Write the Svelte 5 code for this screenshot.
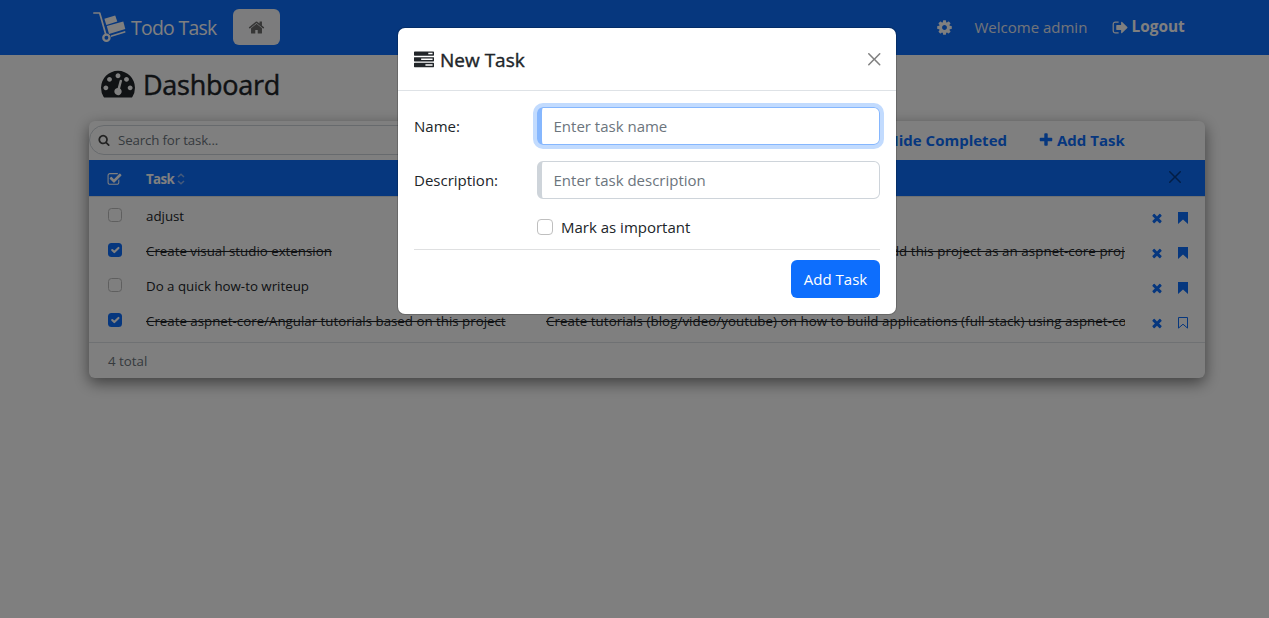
<script>
  const paths = {
    home: 'M1472 992v480q0 26-19 45t-45 19h-384v-384h-256v384h-384q-26 0-45-19t-19-45v-480q0-1 .5-3t.5-3l575-474 575 474q1 2 1 6zm223-69l-62 74q-8 9-21 11h-3q-13 0-21-7l-692-577-692 577q-12 8-24 7-13-2-21-11l-62-74q-8-10-7-23.5t11-21.5l719-599q32-26 76-26t76 26l244 204v-195q0-14 9-23t23-9h192q14 0 23 9t9 23v408l219 182q10 8 11 21.5t-7 23.5z',
    cog: 'M1152 896q0-106-75-181t-181-75-181 75-75 181 75 181 181 75 181-75 75-181zm512-109v222q0 12-8 23t-20 13l-185 28q-19 54-39 91 35 50 107 138 10 12 10 25t-9 23q-27 37-99 108t-94 71q-12 0-26-9l-138-108q-44 23-91 38-16 136-29 186-7 28-36 28h-222q-14 0-24.5-8.5t-11.5-21.5l-28-184q-49-16-90-37l-141 107q-10 9-25 9-14 0-25-11-126-114-165-168-7-10-7-23 0-12 8-23 15-21 51-66.5t54-70.5q-27-50-41-99l-183-27q-13-2-21-12.5t-8-23.5v-222q0-12 8-23t19-13l186-28q14-46 39-92-40-57-107-138-10-12-10-24 0-10 9-23 26-36 98.5-107.5t94.5-71.5q13 0 26 10l138 107q44-23 91-38 16-136 29-186 7-28 36-28h222q14 0 24.5 8.5t11.5 21.5l28 184q49 16 90 37l142-107q9-9 24-9 13 0 25 10 129 119 165 170 7 8 7 22 0 12-8 23-15 21-51 66.5t-54 70.5q26 50 41 98l183 28q13 2 21 12.5t8 23.5z',
    signOut: 'M704 1440q0 4 1 20t.5 26.5-3 23.5-10 19.5-20.5 6.5h-320q-119 0-203.5-84.5t-84.5-203.5v-704q0-119 84.5-203.5t203.5-84.5h320q13 0 22.5 9.5t9.5 22.5q0 4 1 20t.5 26.5-3 23.5-10 19.5-20.5 6.5h-320q-66 0-113 47t-47 113v704q0 66 47 113t113 47h312l11.5 1 11.5 3 8 5.5 7 9 2 13.5zm928-544q0 26-19 45l-544 544q-19 19-45 19t-45-19-19-45v-288h-448q-26 0-45-19t-19-45v-384q0-26 19-45t45-19h448v-288q0-26 19-45t45-19 45 19l544 544q19 19 19 45z',
    search: 'M1216 832q0-185-131.5-316.5t-316.5-131.5-316.5 131.5-131.5 316.5 131.5 316.5 316.5 131.5 316.5-131.5 131.5-316.5zm512 832q0 52-38 90t-90 38q-54 0-90-38l-343-342q-179 124-399 124-143 0-273.5-55.5t-225-150-150-225-55.5-273.5 55.5-273.5 150-225 225-150 273.5-55.5 273.5 55.5 225 150 150 225 55.5 273.5q0 220-124 399l343 343q37 37 37 90z',
    checkSquare: 'M1472 930v318q0 119-84.5 203.5t-203.5 84.5h-832q-119 0-203.5-84.5t-84.5-203.5v-832q0-119 84.5-203.5t203.5-84.5h832q63 0 117 25 15 7 18 23 3 17-9 29l-49 49q-10 10-23 10-3 0-9-2-23-6-45-6h-832q-66 0-113 47t-47 113v832q0 66 47 113t113 47h832q66 0 113-47t47-113v-254q0-13 9-22l64-64q10-10 23-10 6 0 12 3 20 8 20 29zm231-489l-814 814q-24 24-57 24t-57-24l-430-430q-24-24-24-57t24-57l110-110q24-24 57-24t57 24l263 263 647-647q24-24 57-24t57 24l110 110q24 24 24 57t-24 57z',
    plus: 'M1600 736v192q0 40-28 68t-68 28h-416v416q0 40-28 68t-68 28h-192q-40 0-68-28t-28-68v-416h-416q-40 0-68-28t-28-68v-192q0-40 28-68t68-28h416v-416q0-40 28-68t68-28h192q40 0 68 28t28 68v416h416q40 0 68 28t28 68z',
    times: 'M1490 1322q0 40-28 68l-136 136q-28 28-68 28t-68-28l-294-294-294 294q-28 28-68 28t-68-28l-136-136q-28-28-28-68t28-68l294-294-294-294q-28-28-28-68t28-68l136-136q28-28 68-28t68 28l294 294 294-294q28-28 68-28t68 28l136 136q28 28 28 68t-28 68l-294 294 294 294q28 28 28 68z',
    gauge: 'M384 1152q0-53-37.5-90.5t-90.5-37.5-90.5 37.5-37.5 90.5 37.5 90.5 90.5 37.5 90.5-37.5 37.5-90.5zm192-448q0-53-37.5-90.5t-90.5-37.5-90.5 37.5-37.5 90.5 37.5 90.5 90.5 37.5 90.5-37.5 37.5-90.5zm428 481l101-382q6-26-7.5-48.5t-38.5-29.5-48 6.5-30 39.5l-101 382q-60 5-107 43.5t-63 98.5q-20 77 20 146t117 89 146-20 89-117q16-60-6-117t-72-91zm660-33q0-53-37.5-90.5t-90.5-37.5-90.5 37.5-37.5 90.5 37.5 90.5 90.5 37.5 90.5-37.5 37.5-90.5zm-640-640q0-53-37.5-90.5t-90.5-37.5-90.5 37.5-37.5 90.5 37.5 90.5 90.5 37.5 90.5-37.5 37.5-90.5zm448 192q0-53-37.5-90.5t-90.5-37.5-90.5 37.5-37.5 90.5 37.5 90.5 90.5 37.5 90.5-37.5 37.5-90.5zm320 448q0 261-141 483-19 29-54 29h-1402q-35 0-54-29-141-221-141-483 0-182 71-348t191-286 286-191 348-71 348 71 286 191 191 286 71 348z',
    tasks: 'M1024 1408h640v-128h-640v128zm-384-512h1024v-128h-1024v128zm640-512h384v-128h-384v128zm512 832v256q0 26-19 45t-45 19h-1664q-26 0-45-19t-19-45v-256q0-26 19-45t45-19h1664q26 0 45 19t19 45zm0-512v256q0 26-19 45t-45 19h-1664q-26 0-45-19t-19-45v-256q0-26 19-45t45-19h1664q26 0 45 19t19 45zm0-512v256q0 26-19 45t-45 19h-1664q-26 0-45-19t-19-45v-256q0-26 19-45t45-19h1664q26 0 45 19t19 45z'
  };

  const tasks = [
    { name: 'adjust', description: '', done: false, important: true },
    { name: 'Create visual studio extension', description: 'Create a visual studio extension, to help other people add this project as an aspnet-core project', done: true, important: true },
    { name: 'Do a quick how-to writeup', description: '', done: false, important: true },
    { name: 'Create aspnet-core/Angular tutorials based on this project', description: 'Create tutorials (blog/video/youtube) on how to build applications (full stack) using aspnet-core', done: true, important: false }
  ];
</script>

{#snippet icon(name, size)}
  <svg class="icon" width={size} height={size} viewBox="0 0 1792 1792" fill="currentColor" aria-hidden="true">
    <path d={paths[name]} />
  </svg>
{/snippet}

{#snippet cross(size)}
  <svg class="icon" width={size} height={size} viewBox="0 0 16 16" fill="currentColor" aria-hidden="true">
    <path d="M.293.293a1 1 0 0 1 1.414 0L8 6.586 14.293.293a1 1 0 1 1 1.414 1.414L9.414 8l6.293 6.293a1 1 0 0 1-1.414 1.414L8 9.414l-6.293 6.293a1 1 0 0 1-1.414-1.414L6.586 8 .293 1.707a1 1 0 0 1 0-1.414z" />
  </svg>
{/snippet}

<div class="page">
  <header class="navbar">
    <div class="brand">
      <svg class="cart" width="34" height="33" viewBox="0 0 34 33" aria-hidden="true">
        <path d="M.8 2h5.9L12.6 22.8" fill="none" stroke="#fff" stroke-width="1.7" stroke-linecap="round" stroke-linejoin="round" />
        <path d="M11.4 7.8l10.8-3.3 2.1 6-11 3.4z" fill="#fff" />
        <path d="M13.8 15l16.5-4.5 2 7.6-16.3 5z" fill="#fff" />
        <path d="M18.6 25l13-4" stroke="#fff" stroke-width="1.8" stroke-linecap="round" />
        <circle cx="13.4" cy="26.8" r="3.1" fill="none" stroke="#fff" stroke-width="2.3" />
      </svg>
      <span class="brand-name">Todo Task</span>
      <button class="home" aria-label="Home">{@render icon('home', 17)}</button>
    </div>
    <nav class="links">
      <span class="cog">{@render icon('cog', 17)}</span>
      <span class="welcome">Welcome admin</span>
      <span class="logout">{@render icon('signOut', 17)}<b>Logout</b></span>
    </nav>
  </header>

  <main>
    <h1>{@render icon('gauge', 34)}<span>Dashboard</span></h1>

    <section class="card">
      <div class="toolbar">
        <div class="search">{@render icon('search', 12)}<span>Search for task...</span></div>
        <div class="actions">
          <span class="hide">Hide Completed</span>
          <span class="add">{@render icon('plus', 16)}<span>Add Task</span></span>
        </div>
      </div>
      <div class="row head">
        <span class="check">{@render icon('checkSquare', 15)}</span>
        <b class="name">Task<svg class="sort" width="8" height="12" viewBox="0 0 8 12" aria-hidden="true"><path d="M1 4l3-2.8L7 4M1 8l3 2.8L7 8" fill="none" stroke="currentColor" stroke-width="1.5" /></svg></b>
        <span class="clear">{@render cross(12)}</span>
      </div>
      <div class="rows">
        {#each tasks as task}
          <div class="row">
            <span class="check">
              <span class="box" class:on={task.done}>
                {#if task.done}
                  <svg width="14" height="14" viewBox="0 0 20 20" aria-hidden="true"><path d="M6 10l3 3 6-6" fill="none" stroke="#fff" stroke-width="3" stroke-linecap="round" stroke-linejoin="round" /></svg>
                {/if}
              </span>
            </span>
            <span class="name" class:done={task.done}>{task.name}</span>
            <span class="desc" class:done={task.done}>{task.description}</span>
            <span class="tools">
              {@render icon('times', 14)}
              <svg width="10" height="12" viewBox="0 0 10 12" aria-hidden="true">
                {#if task.important}
                  <path d="M0 0h10v12L5 7.6 0 12z" fill="currentColor" />
                {:else}
                  <path d="M.5.5h9v10.6L5 7.2.5 11.1z" fill="none" stroke="currentColor" stroke-width="1" />
                {/if}
              </svg>
            </span>
          </div>
        {/each}
      </div>
      <footer>4 total</footer>
    </section>
  </main>

  <div class="backdrop">
    <div class="modal" role="dialog">
      <div class="modal-head">
        {@render icon('tasks', 20)}
        <h2>New Task</h2>
        <span class="close">{@render cross(12.5)}</span>
      </div>
      <div class="modal-body">
        <div class="field">
          <span class="label">Name:</span>
          <div class="input focus">Enter task name</div>
        </div>
        <div class="field">
          <span class="label">Description:</span>
          <div class="input">Enter task description</div>
        </div>
        <div class="important"><span class="big-box"></span><span>Mark as important</span></div>
        <div class="submit"><button>Add Task</button></div>
      </div>
    </div>
  </div>
</div>

<style>
  :global(body) { margin: 0; overflow: hidden; }
  .page {
    position: relative;
    width: 1269px;
    height: 618px;
    overflow: hidden;
    background: #fff;
    color: #212529;
    font: 15px/24px "Open Sans", "Noto Sans", sans-serif;
  }
  .page *, .page { box-sizing: border-box; }
  .icon { flex: none; display: block; overflow: visible; }
  button { font: inherit; border: 0; padding: 0; }

  .navbar {
    display: flex;
    justify-content: space-between;
    align-items: center;
    height: 55px;
    padding: 0 83.5px 0 93px;
    background: #0d6efd;
    color: #fff;
  }
  .brand, .links, .logout { display: flex; align-items: center; }
  .links { margin-top: -1px; }
  .brand-name { width: 102px; padding-left: 4px; font-size: 19.4px; letter-spacing: -.7px; white-space: nowrap; }
  .home {
    width: 47px;
    height: 36px;
    margin-left: 4px;
    margin-top: -1px;
    display: grid;
    place-items: center;
    border-radius: 6px;
    background: #f8f9fa;
    color: #6c6c6c;
  }
  .cog { margin-right: 22px; }
  .welcome { width: 137px; color: #e4e9f2; white-space: nowrap; }
  .logout b { width: 54px; margin-left: 3px; font-size: 15.4px; white-space: nowrap; }

  main { width: 1116px; margin-left: 89px; }
  h1 {
    display: flex;
    align-items: center;
    gap: 8px;
    height: 66px;
    margin: 0;
    padding: 0 0 6px 12px;
    font-size: 27px;
    font-weight: 500;
    letter-spacing: -.25px;
    -webkit-text-stroke: .45px currentColor;
  }
  h1 .icon { margin-top: -4px; }
  .card {
    height: 257px;
    border-radius: 6px;
    background: #fff;
    box-shadow: 0 5px 15px rgba(0, 0, 0, .5);
    overflow: hidden;
    font-size: 13.3px;
  }
  .toolbar { display: flex; justify-content: space-between; height: 39px; padding-bottom: 1px; align-items: center; }
  .search {
    display: flex;
    align-items: center;
    gap: 8px;
    width: 560px;
    height: 30px;
    padding-left: 8px;
    border: 1px solid #ced4da;
    border-radius: 15px;
    color: #6c757d;
    letter-spacing: -.15px;
  }
  .search .icon { color: #444; }
  .actions, .add { display: flex; align-items: center; }
  .actions { padding-right: 80px; color: #0d6efd; font-size: 15px; font-weight: 700; }
  .hide { margin-right: 31px; }
  .add { gap: 3px; }
  .add > span { width: 68px; white-space: nowrap; }
  .row { display: grid; grid-template-columns: 57px 400px 579px 80px; align-items: center; height: 35px; }
  .check { padding-left: 19px; }
  .row.head { height: 36px; background: #0d6efd; color: #fff; }
  .head .check { padding-left: 18px; }
  .head .check .icon { margin-top: 2px; }
  .head .name { display: flex; align-items: center; gap: 3px; padding-top: 2px; letter-spacing: -.6px; }
  .sort { color: #8bb4f5; }
  .clear { grid-column: 4; padding: 0 0 3px 44px; color: #073c8a; }
  .rows { height: 147px; padding-top: 1px; border-top: 1px solid #dee2e6; border-bottom: 1px solid #dee2e6; }
  .rows .name, .rows .desc { overflow: hidden; white-space: nowrap; }
  .rows .desc { letter-spacing: .07px; }
  .done { text-decoration: line-through; text-decoration-color: #212529; }
  .box {
    display: grid;
    place-items: center;
    width: 14px;
    height: 14px;
    margin-top: -2px;
    border: 1px solid #bfbfbf;
    border-radius: 3.5px;
  }
  .box.on { border: 0; background: #0d6efd; }
  .tools { display: flex; align-items: center; gap: 13px; padding: 4px 0 0 25px; color: #0d6efd; }
  .tools svg:last-child { margin-left: .5px; }
  footer { padding: 7px 19px; line-height: 22px; color: #6c757d; }

  .backdrop { position: absolute; inset: 0; padding: 28px 0 0 398px; background: rgba(0, 0, 0, .5); }
  .modal { width: 498px; height: 286px; border-radius: 7px; background: #fff; box-shadow: 0 0 0 1px rgba(0, 0, 0, .18); }
  .modal-head { display: flex; align-items: center; height: 63px; padding: 0 16px; border-bottom: 1px solid #dee2e6; }
  .modal-head > .icon { margin-top: 1px; }
  h2 { flex: 1; margin: 1px 0 0 6px; font-size: 19px; font-weight: 500; -webkit-text-stroke: .4px currentColor; }
  .close { color: #808080; }
  .modal-body { padding: 16px; }
  .field { display: flex; align-items: center; height: 38px; margin-bottom: 16px; }
  .label { width: 123px; }
  .input {
    flex: 1;
    height: 38px;
    padding: 6px 12px 6px 11.5px;
    border: 1px solid #ced4da;
    border-left-width: 5px;
    border-radius: 6px;
    color: #6c757d;
  }
  .input.focus { border-color: #86b7fe; box-shadow: 0 0 0 4px #c2dbfe; }
  .important {
    display: flex;
    align-items: center;
    gap: 8px;
    height: 35px;
    padding: 0 0 10px 123px;
    border-bottom: 1px solid #dfe0e1;
  }
  .big-box { width: 16px; height: 16px; border: 1px solid #bfbfbf; border-radius: 4px; }
  .submit { display: flex; justify-content: flex-end; padding-top: 10px; }
  .submit button { width: 89px; height: 38px; border-radius: 6px; background: #0d6efd; color: #fff; white-space: nowrap; }
</style>
